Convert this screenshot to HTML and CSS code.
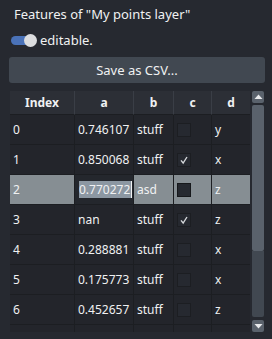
FILE: index.html
```html
<!DOCTYPE html>
<html>
<head>
<meta charset="utf-8">
<link rel="stylesheet" href="styles.css">
</head>
<body>
<div class="panel">
  <div class="title">Features of "My points layer"</div>
  <div class="toggle-row">
    <span class="toggle"><span class="knob"></span></span>
    <span class="toggle-label">editable.</span>
  </div>
  <button class="save">Save as CSV...</button>
  <div class="table-area">
    <div class="table">
      <div class="hcell">Index</div><div class="hcell">a</div><div class="hcell">b</div><div class="hcell">c</div><div class="hcell">d</div>

      <div class="cell">0</div><div class="cell">0.746107</div><div class="cell">stuff</div><div class="cell chk"><span class="box"></span></div><div class="cell">y</div>

      <div class="cell">1</div><div class="cell">0.850068</div><div class="cell">stuff</div><div class="cell chk"><span class="box"><svg viewBox="0 0 14 14" width="14" height="14"><polyline points="3.5,7.5 6,10.5 10.5,3.5" fill="none" stroke="#d5d8db" stroke-width="1.6"/></svg></span></div><div class="cell">x</div>

      <div class="cell sel">2</div><div class="cell sel editor-cell"><span class="editor"><span class="seltext">0.770272</span><span class="caret"></span></span></div><div class="cell sel">asd</div><div class="cell sel chk"><span class="box dark"></span></div><div class="cell sel">z</div>

      <div class="cell">3</div><div class="cell">nan</div><div class="cell">stuff</div><div class="cell chk"><span class="box"><svg viewBox="0 0 14 14" width="14" height="14"><polyline points="3.5,7.5 6,10.5 10.5,3.5" fill="none" stroke="#d5d8db" stroke-width="1.6"/></svg></span></div><div class="cell">z</div>

      <div class="cell">4</div><div class="cell">0.288881</div><div class="cell">stuff</div><div class="cell chk"><span class="box"></span></div><div class="cell">x</div>

      <div class="cell">5</div><div class="cell">0.175773</div><div class="cell">stuff</div><div class="cell chk"><span class="box"></span></div><div class="cell">x</div>

      <div class="cell">6</div><div class="cell">0.452657</div><div class="cell">stuff</div><div class="cell chk"><span class="box"></span></div><div class="cell">z</div>

      <div class="cell"></div><div class="cell"></div><div class="cell"></div><div class="cell"></div><div class="cell"></div>
    </div>
    <div class="scrollbar">
      <div class="sb-btn"><svg viewBox="0 0 11 10" width="11" height="10"><polygon points="1.5,7 9.5,7 5.5,2.5" fill="#e8eaec"/></svg></div>
      <div class="sb-track">
        <div class="sb-handle"></div>
        <div class="sb-rest"></div>
      </div>
      <div class="sb-btn"><svg viewBox="0 0 11 10" width="11" height="10"><polygon points="1.5,3 9.5,3 5.5,7.5" fill="#e8eaec"/></svg></div>
    </div>
  </div>
</div>
</body>
</html>
```

FILE: styles.css
```css
html, body {
  margin: 0;
  padding: 0;
  background: #262930;
}
body {
  width: 272px;
  height: 339px;
  overflow: hidden;
  font-family: "Noto Sans", sans-serif;
  color: #f0f1f2;
}
.panel {
  display: flex;
  flex-direction: column;
  padding: 5px 7px 0 9px;
  height: 332px;
  box-sizing: border-box;
}
.title {
  font-size: 13px;
  line-height: 18px;
  padding-left: 5px;
}
.toggle-row {
  display: flex;
  align-items: center;
  gap: 4px;
  margin-top: 8px;
  height: 18px;
  padding-left: 2px;
}
.toggle {
  position: relative;
  width: 25px;
  height: 12px;
  display: inline-block;
}
.toggle::before {
  content: "";
  position: absolute;
  left: 0;
  top: 1.5px;
  width: 22px;
  height: 9px;
  border-radius: 5px;
  background: #4a72b8;
}
.knob {
  position: absolute;
  left: 13px;
  top: -0.5px;
  width: 13px;
  height: 13px;
  border-radius: 50%;
  background: #dcdddf;
}
.toggle-label {
  font-size: 13px;
  line-height: 18px;
}
.save {
  margin-top: 8px;
  height: 26px;
  border: none;
  border-radius: 3px;
  background: #414851;
  color: #f0f1f2;
  font-family: "Noto Sans", sans-serif;
  font-size: 13px;
  padding: 0;
}
.table-area {
  margin-top: 8px;
  display: flex;
  margin-left: 1px;
  flex: 1;
  min-height: 0;
}
.table {
  display: grid;
  grid-template-columns: 65px 59px 40px 38px 39px;
  grid-auto-rows: 30px;
  grid-template-rows: 24px;
  background: #23252b;
  align-content: start;
  overflow: hidden;
  width: 241px;
}
.hcell {
  background: #2c2f36;
  border-right: 1px solid #3a3e46;
  border-bottom: 1px solid #1c1e22;
  font-weight: bold;
  font-size: 12px;
  display: flex;
  align-items: center;
  justify-content: center;
}
.cell {
  border-right: 1px solid #1c1e22;
  border-bottom: 1px solid #1c1e22;
  font-size: 12px;
  display: flex;
  align-items: center;
  padding-left: 3px;
  box-sizing: border-box;
}
.cell.sel {
  background: #868e93;
}
.chk {
  padding-left: 3px;
}
.box {
  width: 12px;
  height: 12px;
  border: 1px solid #1c1e22;
  background: #262930;
  display: flex;
  align-items: center;
  justify-content: center;
}
.box.dark {
  background: #262930;
  border-color: #16181b;
}
.editor-cell {
  padding: 0;
  background: #868e93;
}
.editor {
  flex: 1;
  align-self: stretch;
  background: #24272d;
  display: flex;
  align-items: center;
  padding-left: 4px;
}
.seltext {
  background: #8c97a2;
  line-height: 17px;
  padding: 0 1px 0 0;
}
.caret {
  width: 1px;
  height: 17px;
  background: #f0f1f2;
}
.scrollbar {
  width: 14px;
  margin-left: 1px;
  display: flex;
  flex-direction: column;
  align-items: center;
  height: 241px;
}
.sb-btn {
  width: 12px;
  height: 12px;
  background: #5a626c;
  border-radius: 2px;
  display: flex;
  align-items: center;
  justify-content: center;
}
.sb-track {
  flex: 1;
  width: 12px;
  display: flex;
  flex-direction: column;
  margin: 2px 0 3px;
}
.sb-handle {
  height: 146px;
  background: #5a626c;
  border-radius: 2px;
}
.sb-rest {
  flex: 1;
  background: #414851;
  border-radius: 0 0 2px 2px;
}
```
